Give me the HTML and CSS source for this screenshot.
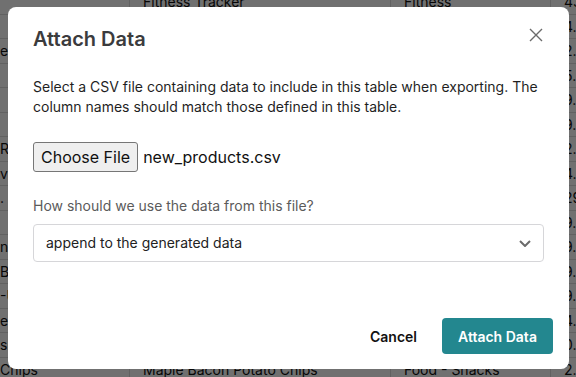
FILE: index.html
```html
<!doctype html>
<html lang="en">
<head>
<meta charset="utf-8" />
<title>Attach Data</title>
<link rel="stylesheet" href="styles.css">
</head>
<body>
 <!-- table behind the dialog -->
 <div class="grid">
   <div class="row"><span></span><span>Fitness Tracker</span><span>Fitness</span><span>43.99</span></div>
   <div class="row"><span></span><span>Yoga Mat Set</span><span>Fitness</span><span>4.99</span></div>
   <div class="row"><span>e</span><span>Phone Case</span><span>Electronics</span><span>2.49</span></div>
   <div class="row"><span></span><span>Desk Lamp</span><span>Home</span><span>5.99</span></div>
   <div class="row"><span></span><span>Coffee Mug</span><span>Kitchen</span><span>9.99</span></div>
   <div class="row"><span></span><span>Gel Pen</span><span>Office</span><span>9.50</span></div>
   <div class="row"><span>Ro</span><span>Garden Rose</span><span>Garden</span><span>2.75</span></div>
   <div class="row"><span>v</span><span>Travel Pillow</span><span>Travel</span><span>4.25</span></div>
   <div class="row"><span>.</span><span>Water Bottle</span><span>Outdoor</span><span>29.00</span></div>
   <div class="row"><span></span><span>Smart Plug</span><span>Electronics</span><span>9.99</span></div>
   <div class="row"><span>ns</span><span>Headphones</span><span>Audio</span><span>9.49</span></div>
   <div class="row"><span>Ba</span><span>Banana Chips</span><span>Food - Snacks</span><span>9.25</span></div>
   <div class="row"><span>-U</span><span>Pick-Up Sticks</span><span>Toys</span><span>9.00</span></div>
   <div class="row"><span>ep</span><span>Sleep Mask</span><span>Travel</span><span>4.50</span></div>
   <div class="row"><span>si</span><span>Raisin Mix</span><span>Food - Snacks</span><span>0.99</span></div>
   <div class="row"><span>Chips</span><span>Maple Bacon Potato Chips</span><span>Food - Snacks</span><span>2.89</span></div>
 </div>

 <div class="overlay"></div>

 <div class="dialog" role="dialog" aria-labelledby="dlg-title">
   <div class="dialog-head">
     <h2 id="dlg-title">Attach Data</h2>
     <button class="close" aria-label="Close">
       <svg width="14" height="14" viewBox="0 0 14 14"><path d="M1 1L13 13M13 1L1 13" stroke="#6b6b6b" stroke-width="1.4" fill="none"/></svg>
     </button>
   </div>
   <div class="dialog-body">
     <p class="intro">Select a CSV file containing data to include in this table when exporting. The column names should match those defined in this table.</p>
     <div class="file-row">
       <button class="file-btn">Choose File</button>
       <span class="file-name">new_products.csv</span>
     </div>
     <label class="lbl">How should we use the data from this file?</label>
     <div class="select">
       <span>append to the generated data</span>
       <svg width="12" height="7" viewBox="0 0 12 7"><path d="M1 1L6 6L11 1" stroke="#6b6b6b" stroke-width="2" fill="none"/></svg>
     </div>
   </div>
   <div class="dialog-foot">
     <button class="cancel">Cancel</button>
     <button class="primary">Attach Data</button>
   </div>
 </div>
</body>
</html>
```

FILE: styles.css
```css
:root{
  --teal:#23878f;
  --text:#1f1f1f;
  --muted:#5b5b5b;
  --line:#d6d6d9;
}
*{box-sizing:border-box;margin:0;padding:0}
body{
  font-family:Inter,"Noto Sans",sans-serif;
  background:#fff;color:#111;
  width:576px;height:377px;overflow:hidden;
}
.grid{margin-top:-10px;font-size:14px}
.row{
  display:grid;grid-template-columns:129px 261px 160px 1fr;
  height:24.5px;align-items:center;border-bottom:1px solid #ddd;
}
.row span{white-space:nowrap;overflow:hidden;padding-left:13px}
.row span:first-child{padding-left:0}
.row span+span{border-left:1px solid #ddd;height:100%;display:flex;align-items:center}

.overlay{position:fixed;inset:0;background:rgba(0,0,0,.56)}

.dialog{
  position:fixed;top:7px;left:8px;width:561px;height:362px;
  background:#fff;border-radius:8px;
  display:flex;flex-direction:column;
  padding:20px 16px 15px 25px;
}
.dialog-head{display:flex;justify-content:space-between;align-items:flex-start;padding-right:10px}
.dialog-head h2{font-size:20px;line-height:24px;font-weight:600;color:#3b3b3d}
.close{background:none;border:0;margin-top:1px;cursor:pointer;line-height:0}

.dialog-body{flex:1;padding-right:9px;color:var(--text);font-size:14px;line-height:20px}
.intro{margin-top:26px}
.file-row{display:flex;align-items:center;gap:5px;margin-top:25px;font-size:16px}
.file-btn{
  font:inherit;font-size:16px;color:#111;height:30px;padding:0 7px;
  background:#efefef;border:1px solid #767676;border-radius:3px;
}
.file-name{color:#111}
.lbl{display:block;margin-top:24px;color:var(--muted)}
.select{
  margin-top:8px;height:38px;border:1px solid var(--line);border-radius:4px;
  display:flex;align-items:center;justify-content:space-between;
  padding:0 12px 0 12px;color:#222;
}

.dialog-foot{display:flex;justify-content:flex-end;align-items:center;gap:25px}
.cancel{background:none;border:0;font:inherit;font-size:14px;font-weight:600;color:#111}
.primary{
  font:inherit;font-size:14px;font-weight:600;color:#fff;
  background:var(--teal);border:0;border-radius:4px;
  height:36px;width:111px;
}
```
